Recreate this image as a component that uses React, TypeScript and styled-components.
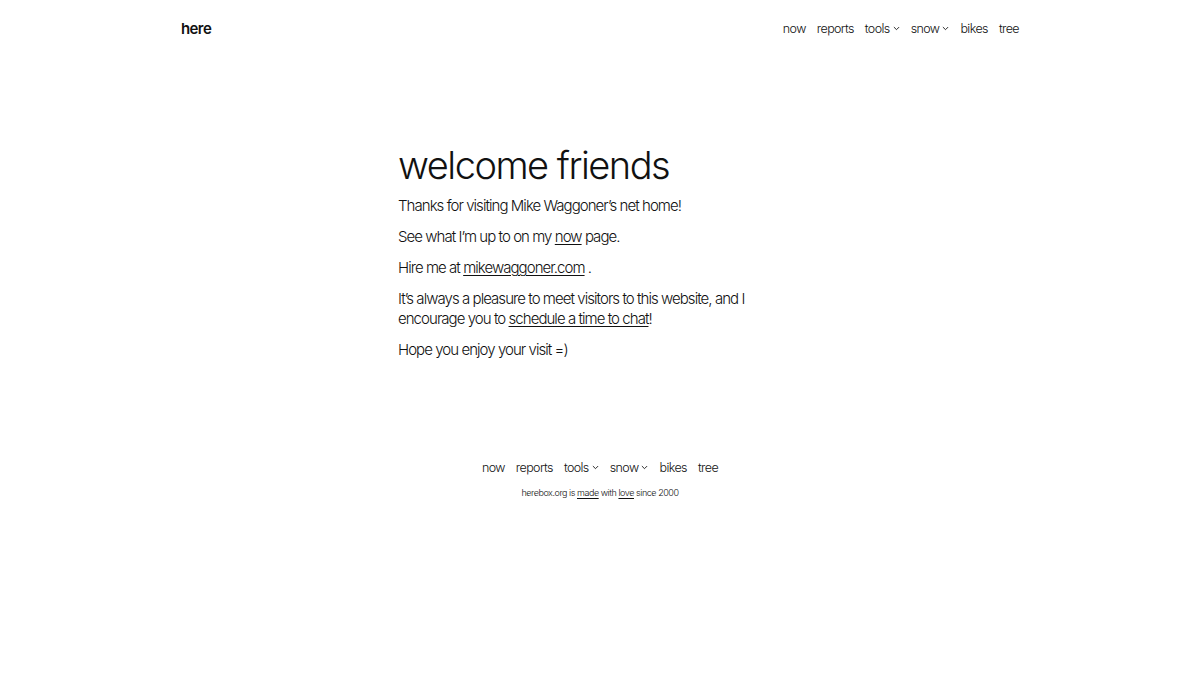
import React from "react";
import styled, { createGlobalStyle } from "styled-components";

const GlobalStyle = createGlobalStyle`
  html, body {
    margin: 0;
    padding: 0;
    background: #ffffff;
  }
  body {
    font-family: Inter, "Noto Sans", sans-serif;
    font-weight: 300;
    color: #111111;
    -webkit-font-smoothing: antialiased;
  }
`;

const Page = styled.div`
  display: flex;
  flex-direction: column;
  min-height: 675px;
`;

const Header = styled.header`
  display: flex;
  align-items: center;
  justify-content: space-between;
  width: 838px;
  margin: 0 auto;
  height: 56px;
`;

const SiteTitle = styled.a`
  font-size: 15px;
  font-weight: 600;
  letter-spacing: -0.6px;
  color: #111;
  text-decoration: none;
`;

const Nav = styled.nav`
  display: flex;
  align-items: center;
  gap: 11px;
  font-size: 12.5px;
  letter-spacing: -0.6px;
`;

const NavItem = styled.a`
  display: flex;
  align-items: center;
  gap: 3px;
  color: #111;
  text-decoration: none;
`;

const Main = styled.main`
  width: 404px;
  margin: 85px auto 0;
`;

const Heading = styled.h1`
  margin: 0 0 7px;
  font-size: 38px;
  font-weight: 300;
  line-height: 48px;
  letter-spacing: -1.5px;
`;

const Para = styled.p`
  margin: 0 0 11px;
  font-size: 15px;
  line-height: 20px;
  letter-spacing: -0.95px;
`;

const Link = styled.a`
  color: #111;
  text-decoration: underline;
  text-underline-offset: 2px;
  text-decoration-thickness: 1px;
`;

const Footer = styled.footer`
  display: flex;
  flex-direction: column;
  align-items: center;
  margin-top: 89px;
  gap: 12px;
`;

const Credit = styled.div`
  font-size: 9px;
  letter-spacing: -0.45px;
`;

function Chevron() {
  return (
    <svg width="7" height="7" viewBox="0 0 24 24" fill="none" stroke="currentColor" strokeWidth="3" strokeLinecap="round" strokeLinejoin="round">
      <path d="M4 8l8 8 8-8" />
    </svg>
  );
}

function Menu() {
  return (
    <Nav>
      <NavItem href="#">now</NavItem>
      <NavItem href="#">reports</NavItem>
      <NavItem href="#">
        tools <Chevron />
      </NavItem>
      <NavItem href="#">
        snow <Chevron />
      </NavItem>
      <NavItem href="#">bikes</NavItem>
      <NavItem href="#">tree</NavItem>
    </Nav>
  );
}

export default function App() {
  return (
    <Page>
      <GlobalStyle />
      <Header>
        <SiteTitle href="#">here</SiteTitle>
        <Menu />
      </Header>
      <Main>
        <Heading>welcome friends</Heading>
        <Para>Thanks for visiting Mike Waggoner’s net home!</Para>
        <Para>
          See what I’m up to on my <Link href="#">now</Link> page.
        </Para>
        <Para>
          Hire me at <Link href="#">mikewaggoner.com</Link> .
        </Para>
        <Para>
          It’s always a pleasure to meet visitors to this website, and I encourage you to{" "}
          <Link href="#">schedule a time to chat</Link>!
        </Para>
        <Para>Hope you enjoy your visit =)</Para>
      </Main>
      <Footer>
        <Menu />
        <Credit>
          herebox.org is <Link href="#">made</Link> with <Link href="#">love</Link> since 2000
        </Credit>
      </Footer>
    </Page>
  );
}
